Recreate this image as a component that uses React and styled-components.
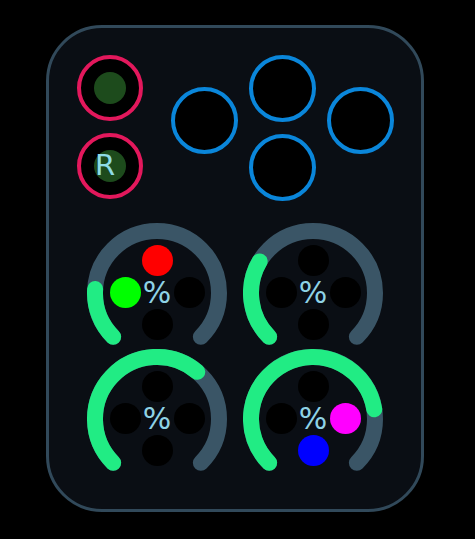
import React from 'react';
import styled, { createGlobalStyle } from 'styled-components';

const GlobalStyle = createGlobalStyle`
  html, body {
    margin: 0;
    padding: 0;
    background: #000;
  }
  body {
    font-family: 'DejaVu Sans', 'Liberation Sans', sans-serif;
  }
`;

const Page = styled.div`
  padding: 25px 0 0 46px;
  min-height: 539px;
  box-sizing: border-box;
`;

const Card = styled.div`
  width: 378px;
  height: 487px;
  box-sizing: border-box;
  border: 3px solid #31495a;
  border-radius: 56px;
  background: #0a0e14;
  display: flex;
  flex-direction: column;
  align-items: center;
  padding-top: 27px;
`;

const TopRow = styled.div`
  display: flex;
  gap: 28px;
`;

const Column = styled.div`
  display: flex;
  flex-direction: column;
  gap: 12px;
  margin-top: ${(p) => p.$offset || 0}px;
`;

const DPad = styled.div`
  display: flex;
  gap: 11px;
`;

const Ring = styled.div`
  width: ${(p) => p.$size}px;
  height: ${(p) => p.$size}px;
  box-sizing: border-box;
  border-radius: 50%;
  border: 4px solid ${(p) => p.$color};
  background: #000;
  display: grid;
  place-items: center;
`;

const Led = styled.div`
  grid-area: 1 / 1;
  width: 32px;
  height: 32px;
  border-radius: 50%;
  background: #1d4b1c;
`;

const Letter = styled.span`
  grid-area: 1 / 1;
  font-size: 29px;
  line-height: 1;
  color: #8fdbe6;
  margin-right: 9px;
  margin-top: -2px;
`;

const GaugeGrid = styled.div`
  margin-top: 22px;
  display: grid;
  grid-template-columns: 140px 140px;
  grid-auto-rows: 126px;
  column-gap: 16px;
`;

const GaugeBox = styled.div`
  display: grid;
  width: 140px;
  height: 126px;
  > * {
    grid-area: 1 / 1;
  }
`;

const Cross = styled.div`
  justify-self: center;
  align-self: start;
  margin-top: 22px;
  display: grid;
  grid-template-columns: repeat(3, 31px);
  grid-template-rows: repeat(3, 31px);
  gap: 1px;
`;

const Dot = styled.div`
  grid-column: ${(p) => p.$col};
  grid-row: ${(p) => p.$row};
  border-radius: 50%;
  background: ${(p) => p.$color || '#000'};
`;

const Percent = styled.span`
  grid-column: 2;
  grid-row: 2;
  position: relative;
  z-index: 1;
  justify-self: center;
  align-self: center;
  font-size: 30px;
  line-height: 1;
  color: #8fd3e6;
`;

const R = 62;
const C = 70;

const pt = (deg) => {
  const a = (deg * Math.PI) / 180;
  return [C + R * Math.cos(a), C + R * Math.sin(a)];
};

const arc = (from, to) => {
  const [x1, y1] = pt(from);
  const [x2, y2] = pt(to);
  const large = to - from > 180 ? 1 : 0;
  return `M ${x1} ${y1} A ${R} ${R} 0 ${large} 1 ${x2} ${y2}`;
};

function Gauge({ value, dots }) {
  const end = 135 + 270 * value;
  return (
    <GaugeBox>
      <svg width="140" height="126" viewBox="0 0 140 126">
        <path d={arc(135, 405)} fill="none" stroke="#3a5566" strokeWidth="16" strokeLinecap="round" />
        <path d={arc(135, end)} fill="none" stroke="#21ec84" strokeWidth="16" strokeLinecap="round" />
      </svg>
      <Cross>
        <Dot $col={2} $row={1} $color={dots.up} />
        <Dot $col={1} $row={2} $color={dots.left} />
        <Percent>%</Percent>
        <Dot $col={3} $row={2} $color={dots.right} />
        <Dot $col={2} $row={3} $color={dots.down} />
      </Cross>
    </GaugeBox>
  );
}

const gauges = [
  { value: 0.18, dots: { up: '#ff0000', left: '#00ff00' } },
  { value: 0.28, dots: {} },
  { value: 0.65, dots: {} },
  { value: 0.8, dots: { right: '#ff00ff', down: '#0000ff' } },
];

export default function App() {
  const pink = '#e3185c';
  const blue = '#0a86da';
  return (
    <>
      <GlobalStyle />
      <Page>
        <Card>
          <TopRow>
            <Column>
              <Ring $size={66} $color={pink}>
                <Led />
              </Ring>
              <Ring $size={66} $color={pink}>
                <Led />
                <Letter>R</Letter>
              </Ring>
            </Column>
            <DPad>
              <Column $offset={32}>
                <Ring $size={67} $color={blue} />
              </Column>
              <Column>
                <Ring $size={67} $color={blue} />
                <Ring $size={67} $color={blue} />
              </Column>
              <Column $offset={32}>
                <Ring $size={67} $color={blue} />
              </Column>
            </DPad>
          </TopRow>
          <GaugeGrid>
            {gauges.map((g, i) => (
              <Gauge key={i} value={g.value} dots={g.dots} />
            ))}
          </GaugeGrid>
        </Card>
      </Page>
    </>
  );
}
